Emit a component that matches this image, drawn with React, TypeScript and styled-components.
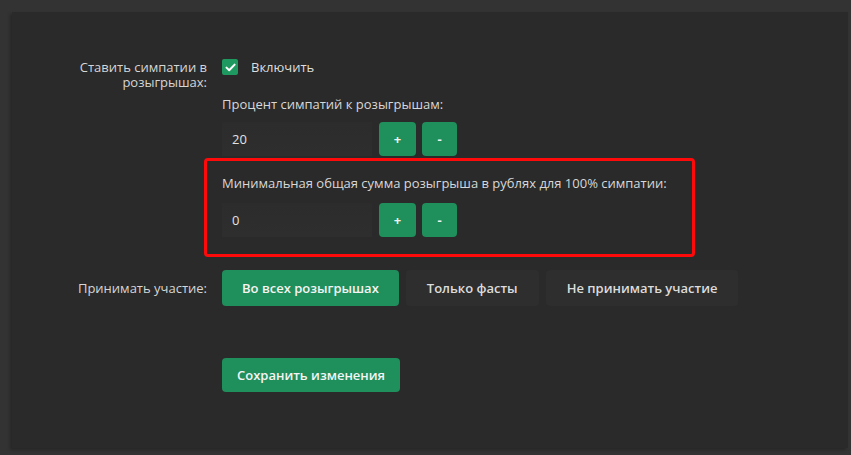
import React, { useState } from "react";
import styled, { createGlobalStyle } from "styled-components";

const Global = createGlobalStyle`
  html, body { margin: 0; padding: 0; background: #333333; }
  body { font-family: "Open Sans", "Noto Sans", sans-serif; font-size: 13px; color: #dcdcdc; }
  * { box-sizing: border-box; }
`;

const Page = styled.div`
  width: 851px;
  height: 455px;
  padding: 12px 3px 7px 12px;
  background: #333333;
`;

const Panel = styled.div`
  height: 100%;
  background: #2a2a2a;
  box-shadow: -2px 2px 3px rgba(0, 0, 0, 0.25);
  padding-top: 47px;
  display: flex;
  flex-direction: column;
`;

const Row = styled.div<{ $mt?: number; $center?: boolean }>`
  display: flex;
  align-items: ${(p) => (p.$center ? "center" : "flex-start")};
  gap: 15px;
  margin-top: ${(p) => p.$mt ?? 0}px;
`;

const Label = styled.div`
  width: 195px;
  flex: none;
  text-align: right;
  line-height: 15px;
  padding-top: 1px;
  color: #d6d6d6;
`;

const Content = styled.div`
  display: flex;
  flex-direction: column;
`;

const CheckLine = styled.label`
  display: flex;
  align-items: center;
  gap: 13px;
  height: 16px;
  line-height: 16px;
  color: #dedede;
  cursor: pointer;
`;

const Box = styled.span`
  width: 16px;
  height: 16px;
  border-radius: 2px;
  background: #1e9a60;
  display: flex;
  align-items: center;
  justify-content: center;
`;

const SubLabel = styled.div<{ $mt: number }>`
  margin-top: ${(p) => p.$mt}px;
  line-height: 16px;
  color: #d8d8d8;
`;

const InputRow = styled.div<{ $mt: number }>`
  display: flex;
  gap: 6px;
  margin-top: ${(p) => p.$mt}px;
`;

const NumInput = styled.input`
  width: 150px;
  height: 34px;
  margin-right: 1px;
  border: none;
  outline: none;
  background: linear-gradient(#2c2c2c, #2e2e2e);
  color: #e2e2e2;
  font-family: inherit;
  font-size: 13px;
  padding: 0 10px;
`;

const StepButton = styled.button<{ $w: number }>`
  width: ${(p) => p.$w}px;
  height: 34px;
  border: none;
  border-radius: 4px;
  background: #1f8f5c;
  color: #f2f2f2;
  font-family: inherit;
  font-weight: 700;
  font-size: 13px;
  padding: 0;
  cursor: pointer;
`;

const Highlight = styled.div`
  margin-top: 2px;
  margin-left: -18px;
  width: 491px;
  border: 3px solid #ff0a0a;
  border-radius: 4px;
  padding: 14px 15px 17px 15px;
`;

const Options = styled.div`
  display: flex;
  gap: 7px;
`;

const OptionButton = styled.button<{ $active?: boolean }>`
  height: 36px;
  border: none;
  border-radius: 4px;
  padding: 0 ${(p) => (p.$active ? 20 : 21)}px;
  background: ${(p) => (p.$active ? "#1f8f5c" : "#2e2e2e")};
  color: ${(p) => (p.$active ? "#f4f4f4" : "#dcdcdc")};
  font-family: inherit;
  font-weight: 600;
  font-size: 13px;
  cursor: pointer;
`;

const SaveButton = styled.button`
  height: 34px;
  border: none;
  border-radius: 4px;
  padding: 0 15px;
  background: #1f8f5c;
  color: #f4f4f4;
  font-family: inherit;
  font-weight: 600;
  font-size: 13px;
  cursor: pointer;
`;

const Spacer = styled.div`
  width: 195px;
  flex: none;
`;

export default function App() {
  const [pct, setPct] = useState(20);
  const [sum, setSum] = useState(0);
  const [mode, setMode] = useState(0);
  const modes = ["Во всех розыгрышах", "Только фасты", "Не принимать участие"];
  return (
    <>
      <Global />
      <Page>
        <Panel>
          <Row>
            <Label>
              Ставить симпатии в
              <br />
              розыгрышах:
            </Label>
            <Content>
              <CheckLine>
                <Box>
                  <svg width="11" height="9" viewBox="0 0 11 9">
                    <path d="M1.5 4.6 L4.2 7.2 L9.6 1.6" fill="none" stroke="#fff" strokeWidth="2" strokeLinecap="round" strokeLinejoin="round" />
                  </svg>
                </Box>
                Включить
              </CheckLine>
              <SubLabel $mt={21}>Процент симпатий к розыгрышам:</SubLabel>
              <InputRow $mt={10}>
                <NumInput value={pct} onChange={(e) => setPct(Number(e.target.value) || 0)} />
                <StepButton $w={37} onClick={() => setPct(pct + 1)}>+</StepButton>
                <StepButton $w={35} onClick={() => setPct(pct - 1)}>-</StepButton>
              </InputRow>
              <Highlight>
                <SubLabel $mt={0}>Минимальная общая сумма розыгрыша в рублях для 100% симпатии:</SubLabel>
                <InputRow $mt={12}>
                  <NumInput value={sum} onChange={(e) => setSum(Number(e.target.value) || 0)} />
                  <StepButton $w={37} onClick={() => setSum(sum + 1)}>+</StepButton>
                  <StepButton $w={35} onClick={() => setSum(sum - 1)}>-</StepButton>
                </InputRow>
              </Highlight>
            </Content>
          </Row>
          <Row $mt={13} $center>
            <Label>Принимать участие:</Label>
            <Options>
              {modes.map((m, i) => (
                <OptionButton key={m} $active={mode === i} onClick={() => setMode(i)}>
                  {m}
                </OptionButton>
              ))}
            </Options>
          </Row>
          <Row $mt={52}>
            <Spacer />
            <SaveButton>Сохранить изменения</SaveButton>
          </Row>
        </Panel>
      </Page>
    </>
  );
}
